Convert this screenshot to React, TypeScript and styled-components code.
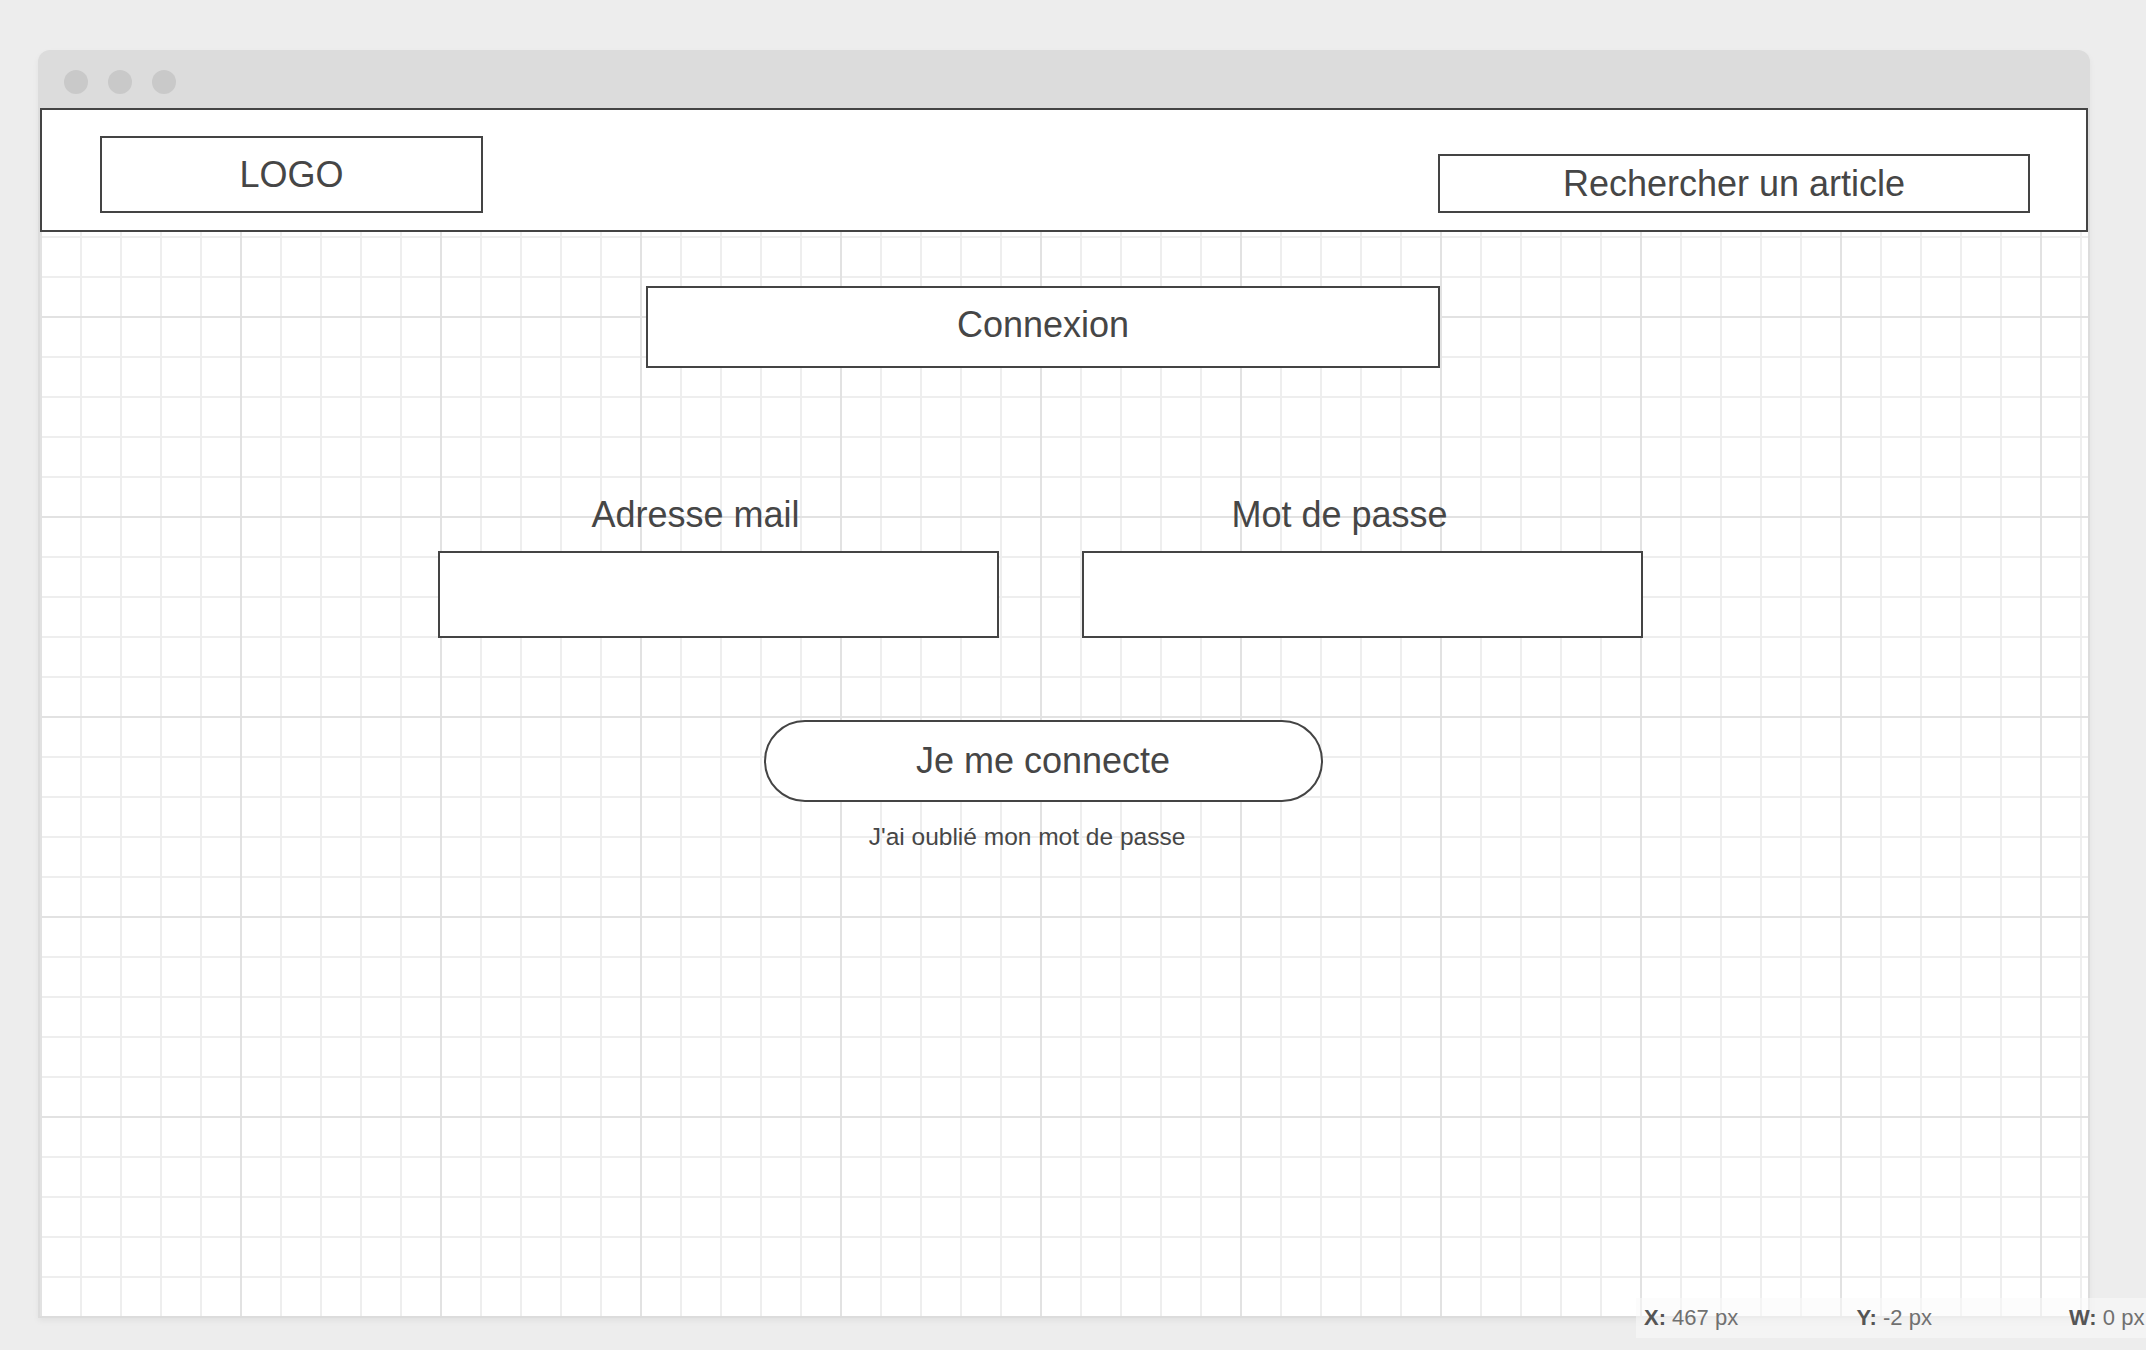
import styled, { createGlobalStyle } from "styled-components";

const GlobalStyle = createGlobalStyle`
  html, body {
    margin: 0;
    padding: 0;
    background: #ededed;
  }
  body {
    font-family: "Liberation Sans", Arial, sans-serif;
    color: #464646;
  }
`;

const Page = styled.div`
  position: relative;
  width: 2146px;
  height: 1350px;
  padding: 50px 0 0 38px;
  box-sizing: border-box;
  overflow: hidden;
`;

const Window = styled.div`
  width: 2052px;
  height: 1268px;
  display: flex;
  flex-direction: column;
  background: #dcdcdc;
  border-radius: 12px 12px 0 0;
  padding: 0 2px 2px;
  box-sizing: border-box;
  box-shadow: 0 3px 6px rgba(0, 0, 0, 0.05);
`;

const TitleBar = styled.div`
  height: 58px;
  display: flex;
  gap: 20px;
  padding: 20px 0 0 24px;
  box-sizing: border-box;
`;

const Dot = styled.span`
  width: 24px;
  height: 24px;
  border-radius: 50%;
  background: #c9c9c9;
`;

const Canvas = styled.div`
  flex: 1;
  display: flex;
  flex-direction: column;
  background-color: #fff;
  background-image: linear-gradient(to right, #e2e2e2 2px, transparent 2px),
    linear-gradient(to bottom, #e2e2e2 2px, transparent 2px),
    linear-gradient(to right, #eeeeee 2px, transparent 2px),
    linear-gradient(to bottom, #eeeeee 2px, transparent 2px);
  background-size: 200px 200px, 200px 200px, 40px 40px, 40px 40px;
  background-position: 0 8px;
`;

const Header = styled.header`
  height: 124px;
  flex-shrink: 0;
  display: flex;
  justify-content: space-between;
  align-items: flex-end;
  padding: 0 56px 17px 58px;
  box-sizing: border-box;
  background: #fff;
  border: 2px solid #444;
`;

const Frame = styled.div<{ $w: number; $h: number }>`
  width: ${(p) => p.$w}px;
  height: ${(p) => p.$h}px;
  display: flex;
  align-items: center;
  justify-content: center;
  box-sizing: border-box;
  border: 2px solid #444;
  background: #fff;
  font-size: 36px;
`;

const Main = styled.main`
  display: flex;
  flex-direction: column;
  align-items: center;
  padding-right: 42px;
`;

const Title = styled(Frame)`
  margin-top: 54px;
  padding-bottom: 4px;
`;

const Fields = styled.div`
  margin-top: 126px;
  margin-right: 5px;
  display: flex;
  gap: 83px;
`;

const Field = styled.label`
  display: flex;
  flex-direction: column;
  align-items: center;
`;

const Label = styled.span`
  font-size: 36px;
  line-height: 41px;
  padding-right: 46px;
`;

const Input = styled.input`
  margin-top: 16px;
  width: 561px;
  height: 87px;
  padding: 0 16px;
  box-sizing: border-box;
  border: 2px solid #444;
  background: #fff;
  font: inherit;
  font-size: 28px;
  outline: none;
`;

const Submit = styled.button`
  margin-top: 82px;
  width: 559px;
  height: 82px;
  box-sizing: border-box;
  border: 2px solid #444;
  border-radius: 41px;
  background: #fff;
  color: #464646;
  font-family: inherit;
  font-size: 36px;
  padding: 0;
`;

const Forgot = styled.a`
  margin-top: 21px;
  padding-right: 32px;
  font-size: 24.5px;
  line-height: 28px;
  color: #464646;
  text-decoration: none;
`;

const Status = styled.div`
  position: absolute;
  left: 1636px;
  right: 0;
  top: 1298px;
  height: 40px;
  display: flex;
  padding-left: 8px;
  background: rgba(250, 250, 250, 0.55);
  font-size: 22px;
  line-height: 40px;
  color: #707070;
`;

const StatusItem = styled.span`
  width: 212.5px;
  flex-shrink: 0;
  white-space: nowrap;

  b {
    color: #555;
  }
`;

export default function App() {
  return (
    <Page>
      <GlobalStyle />
      <Window>
        <TitleBar>
          <Dot />
          <Dot />
          <Dot />
        </TitleBar>
        <Canvas>
          <Header>
            <Frame $w={383} $h={77}>
              LOGO
            </Frame>
            <Frame $w={592} $h={59}>
              Rechercher un article
            </Frame>
          </Header>
          <Main>
            <Title $w={794} $h={82}>
              Connexion
            </Title>
            <Fields>
              <Field>
                <Label>Adresse mail</Label>
                <Input type="email" />
              </Field>
              <Field>
                <Label>Mot de passe</Label>
                <Input type="password" />
              </Field>
            </Fields>
            <Submit type="button">Je me connecte</Submit>
            <Forgot href="#">J'ai oublié mon mot de passe</Forgot>
          </Main>
        </Canvas>
      </Window>
      <Status>
        <StatusItem>
          <b>X:</b> 467 px
        </StatusItem>
        <StatusItem>
          <b>Y:</b> -2 px
        </StatusItem>
        <StatusItem>
          <b>W:</b> 0 px
        </StatusItem>
      </Status>
    </Page>
  );
}
